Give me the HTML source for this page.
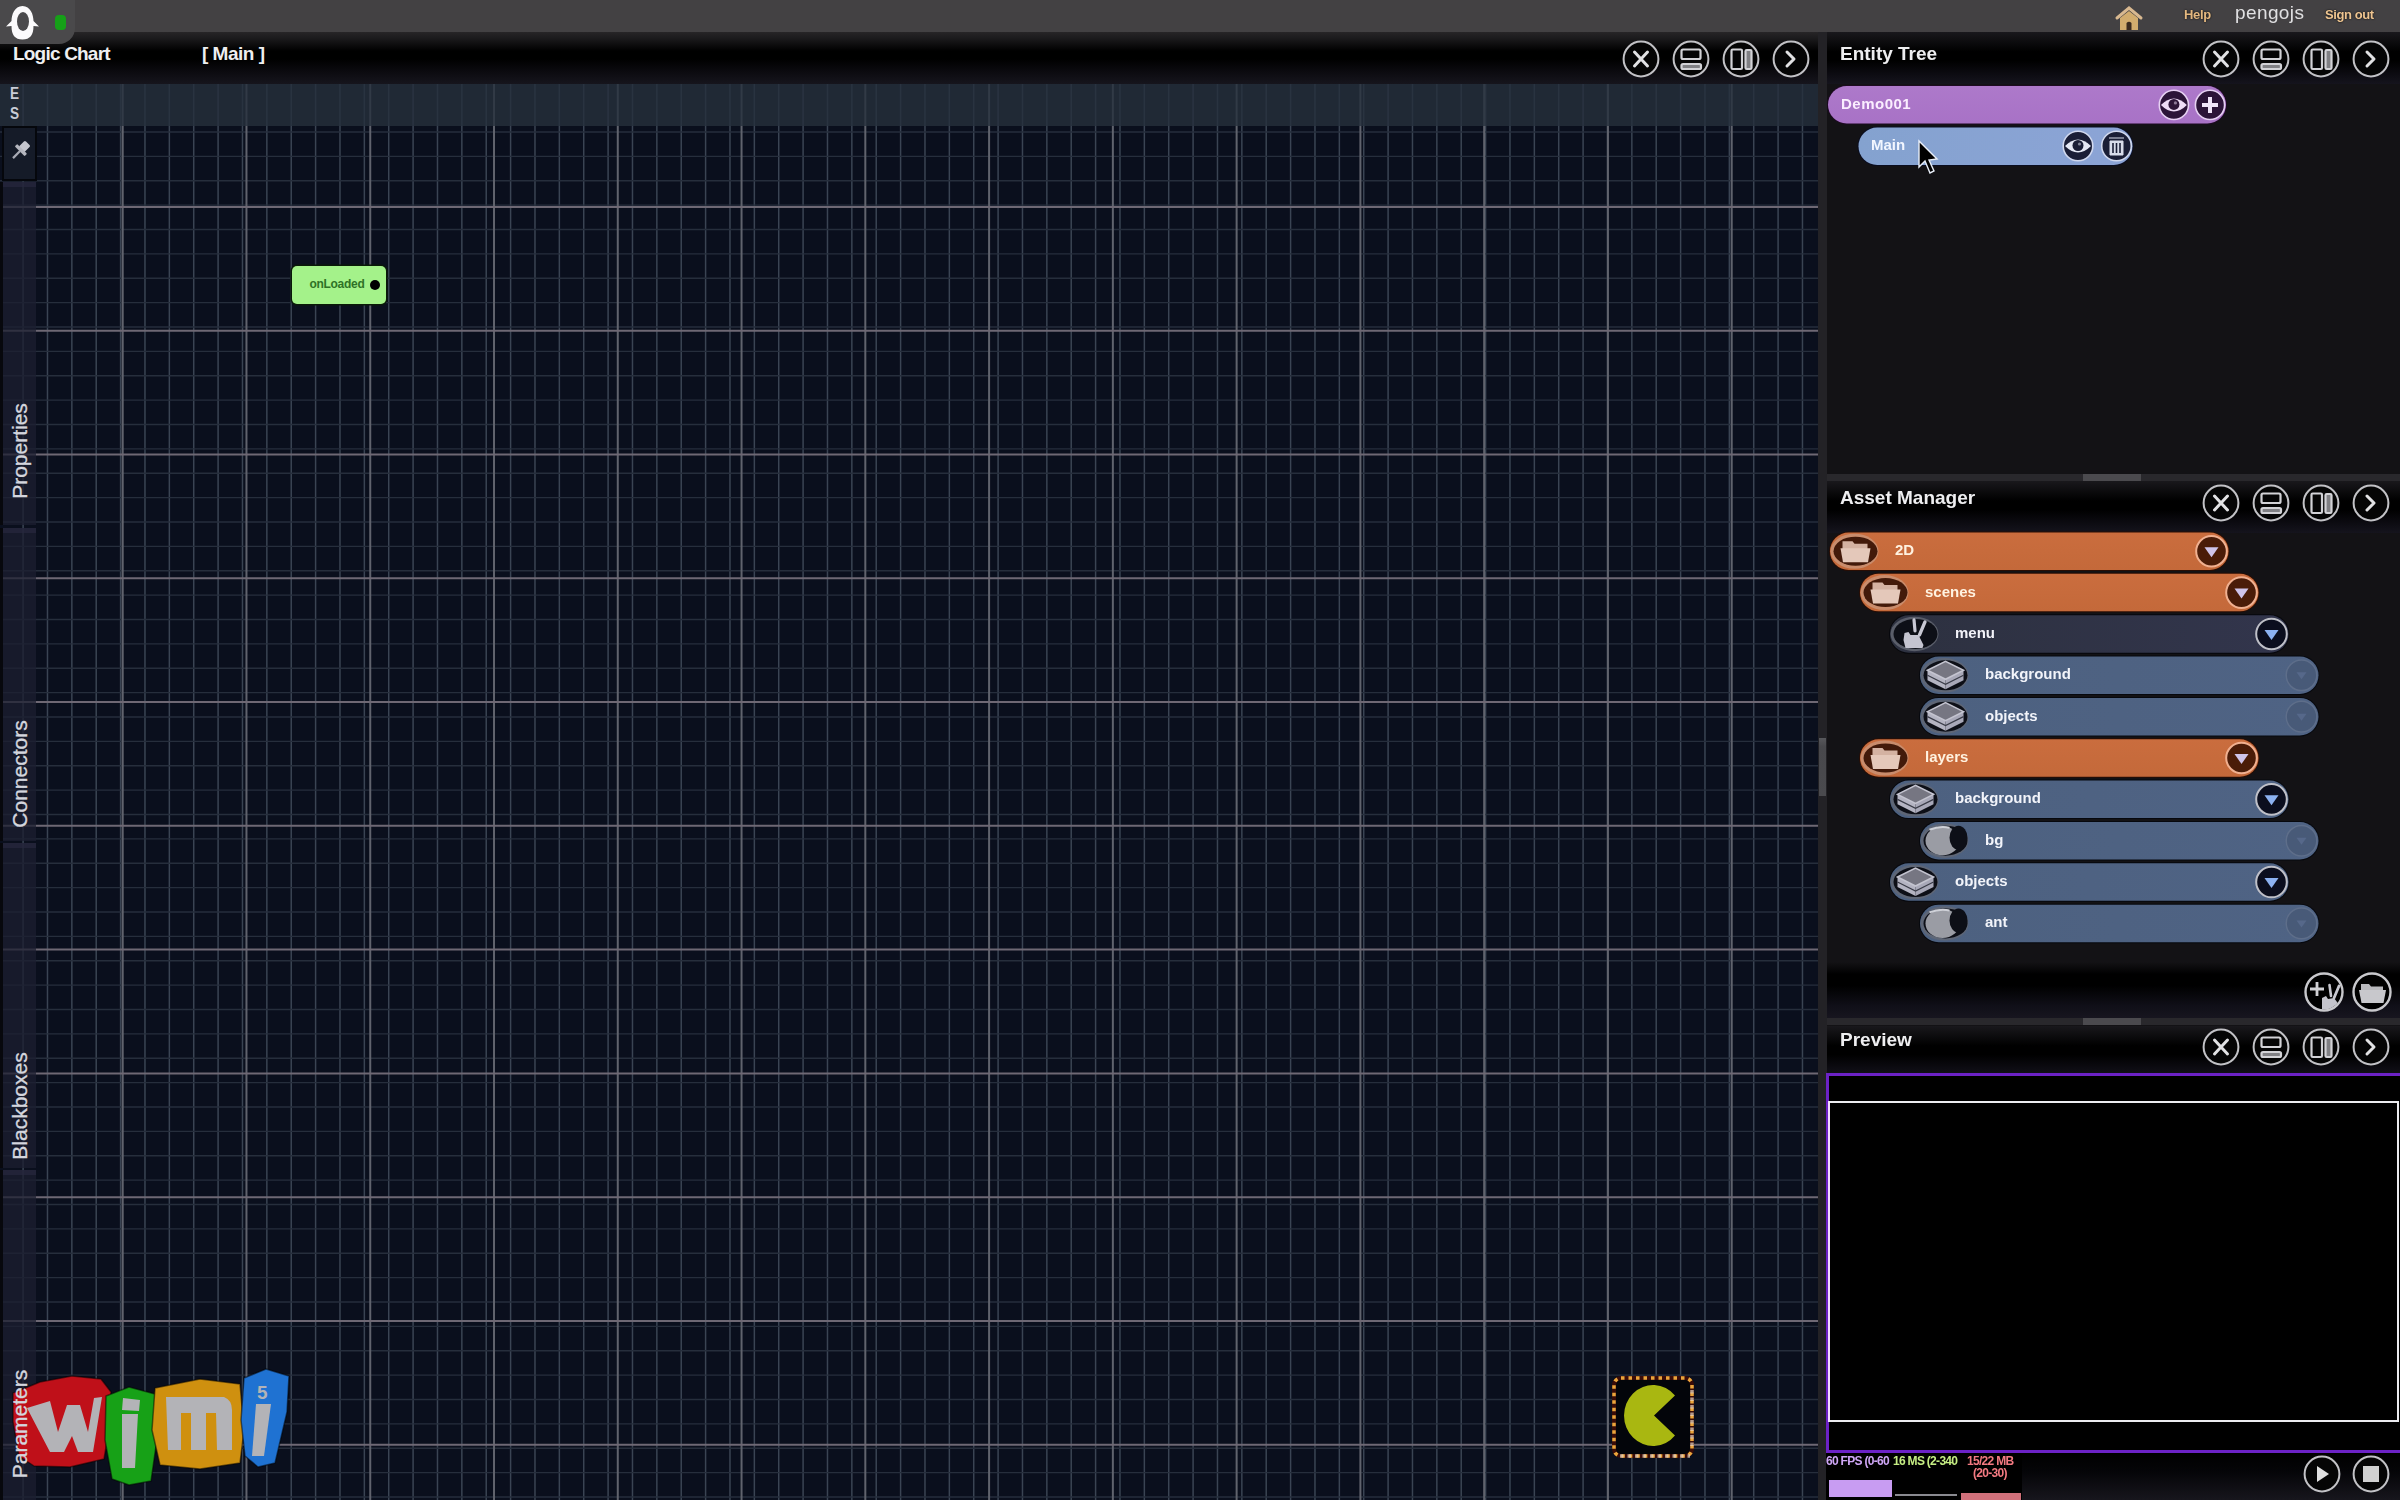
<!DOCTYPE html><html><head><meta charset="utf-8"><style>
*{margin:0;padding:0;box-sizing:border-box}
html,body{width:2400px;height:1500px;overflow:hidden;background:#0e0d11;font-family:"Liberation Sans",sans-serif}
.abs{position:absolute}
.t{position:absolute;white-space:nowrap;line-height:1}
.title{font-weight:bold;font-size:19px;color:#eeeef0}
</style></head><body><div style="position:absolute;left:0;top:0;width:2400px;height:1500px;overflow:hidden;filter:blur(0.45px)">
<div class="abs" style="left:0;top:0;width:2400px;height:32px;background:#434143"></div>
<div class="abs" style="left:0;top:32px;width:1818px;height:52px;background:linear-gradient(#272527 0px,#1c1b1d 6px,#000 19px,#000 27px,#0c0b10 40px,#16151d 52px)"></div>
<svg class="abs" style="left:0;top:0" width="1818" height="1500">
<rect x="0" y="84" width="1818" height="1416" fill="#0a0f1d"/>
<path d="M23.10 84V1500M47.48 84V1500M71.85 84V1500M96.22 84V1500M120.60 84V1500M144.97 84V1500M169.35 84V1500M193.72 84V1500M218.10 84V1500M242.47 84V1500M266.85 84V1500M291.23 84V1500M315.60 84V1500M339.98 84V1500M364.35 84V1500M388.73 84V1500M413.10 84V1500M437.48 84V1500M461.85 84V1500M486.23 84V1500M510.60 84V1500M534.98 84V1500M559.35 84V1500M583.73 84V1500M608.10 84V1500M632.48 84V1500M656.85 84V1500M681.23 84V1500M705.60 84V1500M729.98 84V1500M754.35 84V1500M778.73 84V1500M803.10 84V1500M827.48 84V1500M851.85 84V1500M876.23 84V1500M900.60 84V1500M924.98 84V1500M949.35 84V1500M973.73 84V1500M998.10 84V1500M1022.48 84V1500M1046.85 84V1500M1071.22 84V1500M1095.60 84V1500M1119.97 84V1500M1144.35 84V1500M1168.72 84V1500M1193.10 84V1500M1217.47 84V1500M1241.85 84V1500M1266.22 84V1500M1290.60 84V1500M1314.97 84V1500M1339.35 84V1500M1363.72 84V1500M1388.10 84V1500M1412.47 84V1500M1436.85 84V1500M1461.22 84V1500M1485.60 84V1500M1509.97 84V1500M1534.35 84V1500M1558.72 84V1500M1583.10 84V1500M1607.47 84V1500M1631.85 84V1500M1656.22 84V1500M1680.60 84V1500M1704.97 84V1500M1729.35 84V1500M1753.72 84V1500M1778.10 84V1500M1802.47 84V1500" stroke="#3a4453" stroke-width="1.5" fill="none"/><path d="M0 131.97H1818M0 156.35H1818M0 180.72H1818M0 205.10H1818M0 229.47H1818M0 253.85H1818M0 278.23H1818M0 302.60H1818M0 326.98H1818M0 351.35H1818M0 375.73H1818M0 400.10H1818M0 424.48H1818M0 448.85H1818M0 473.23H1818M0 497.60H1818M0 521.98H1818M0 546.35H1818M0 570.73H1818M0 595.10H1818M0 619.48H1818M0 643.85H1818M0 668.23H1818M0 692.60H1818M0 716.98H1818M0 741.35H1818M0 765.73H1818M0 790.10H1818M0 814.48H1818M0 838.85H1818M0 863.23H1818M0 887.60H1818M0 911.98H1818M0 936.35H1818M0 960.73H1818M0 985.10H1818M0 1009.48H1818M0 1033.85H1818M0 1058.22H1818M0 1082.60H1818M0 1106.97H1818M0 1131.35H1818M0 1155.72H1818M0 1180.10H1818M0 1204.47H1818M0 1228.85H1818M0 1253.22H1818M0 1277.60H1818M0 1301.97H1818M0 1326.35H1818M0 1350.72H1818M0 1375.10H1818M0 1399.47H1818M0 1423.85H1818M0 1448.22H1818M0 1472.60H1818M0 1496.97H1818" stroke="#262e3c" stroke-width="1.4" fill="none"/>
<path d="M122.70 84V1500M246.47 84V1500M370.24 84V1500M494.01 84V1500M617.78 84V1500M741.55 84V1500M865.32 84V1500M989.09 84V1500M1112.86 84V1500M1236.63 84V1500M1360.40 84V1500M1484.17 84V1500M1607.94 84V1500M1731.71 84V1500" stroke="#60636d" stroke-width="2" fill="none"/>
<path d="M0 207.00H1818M0 330.77H1818M0 454.54H1818M0 578.31H1818M0 702.08H1818M0 825.85H1818M0 949.62H1818M0 1073.39H1818M0 1197.16H1818M0 1320.93H1818M0 1444.70H1818" stroke="#6e6874" stroke-width="2" fill="none"/>
<rect x="0" y="84" width="1818" height="42" fill="#262f3c" fill-opacity="0.8"/>
</svg>
<div class="t" style="left:10px;top:85.5px;font-size:16px;font-weight:bold;color:#c8ccd6;transform:scaleX(0.85);transform-origin:0 0">E</div><div class="t" style="left:10px;top:105.5px;font-size:16px;font-weight:bold;color:#c8ccd6;transform:scaleX(0.85);transform-origin:0 0">S</div><div class="abs" style="left:2px;top:126px;width:35px;height:55px;background:#151b28;border:2px solid #05070c"></div><svg class="abs" style="left:7px;top:138px" width="26" height="28" viewBox="0 0 26 28"><g transform="rotate(45 13 13)"><rect x="9" y="2" width="8" height="9" rx="1.5" fill="#c4c6ce"/><rect x="6" y="10" width="14" height="3.5" rx="1" fill="#b4b6be"/><rect x="12" y="13" width="2.2" height="10" fill="#a8aab4"/></g></svg>
<div class="abs" style="left:0;top:0;width:1px;height:1px"></div>
<div class="abs" style="left:0;top:182px;width:3px;height:343px;background:#07080d"></div><div class="abs" style="left:3px;top:182px;width:33px;height:343px;background:rgba(28,31,48,0.75);border-top:5px solid rgba(40,40,62,0.7)"></div><div class="abs" style="left:0;top:528px;width:3px;height:313px;background:#07080d"></div><div class="abs" style="left:3px;top:528px;width:33px;height:313px;background:rgba(28,31,48,0.75);border-top:5px solid rgba(40,40,62,0.7)"></div><div class="abs" style="left:0;top:843px;width:3px;height:325px;background:#07080d"></div><div class="abs" style="left:3px;top:843px;width:33px;height:325px;background:rgba(28,31,48,0.75);border-top:5px solid rgba(40,40,62,0.7)"></div><div class="abs" style="left:0;top:1170px;width:3px;height:330px;background:#07080d"></div><div class="abs" style="left:3px;top:1170px;width:33px;height:330px;background:rgba(28,31,48,0.75);border-top:5px solid rgba(40,40,62,0.7)"></div>
<div class="abs" style="left:292px;top:266px;width:94px;height:38px;background:#a4f28a;border-radius:5px;box-shadow:0 0 0 1.5px #0a1a08"></div><div class="t" style="left:309.5px;top:277.8px;font-size:12px;font-weight:bold;color:#2f7226;letter-spacing:-0.3px">onLoaded</div><div class="abs" style="left:370px;top:280px;width:10px;height:10px;border-radius:50%;background:#000"></div><svg class="abs" style="left:1608px;top:1372px" width="92" height="92" viewBox="1608 1372 92 92"><rect x="1614" y="1378" width="78" height="78" rx="7" fill="#03050a" stroke="#3a0c08" stroke-width="4"/><rect x="1614" y="1378" width="78" height="78" rx="7" fill="none" stroke="#eaa53c" stroke-width="3.5" stroke-dasharray="3.5 4"/><path d="M1692 1390V1450M1620 1456H1690" stroke="#e8d6c4" stroke-width="3.5" stroke-dasharray="3.5 4" opacity=".7"/><path d="M1675 1395.6A29 30.5 0 1 0 1675 1435.4L1654 1415.5Z" fill="#a9b711"/></svg><svg class="abs" style="left:0px;top:1360px" width="300" height="140" viewBox="0 1360 300 140">
<g stroke="rgba(0,0,0,0.5)" stroke-width="1.5" stroke-linejoin="round">
<path d="M13 1393L40 1382L72 1376L101 1379L111 1392L109 1430L104 1459L70 1467L34 1466L19 1456L13 1422Z" fill="#bf1019"/>
<path d="M106 1396L129 1387L155 1394L158 1432L151 1481L129 1485L112 1479L105 1440Z" fill="#17a117"/>
<path d="M155 1388L200 1379L240 1384L244 1430L240 1463L200 1469L160 1465L152 1430Z" fill="#cf900f"/>
<path d="M244 1378L266 1369L289 1376L287 1412L275 1463L258 1467L245 1456L241 1420Z" fill="#1f72d2"/>
</g>
<path d="M27 1408L50 1401L58 1432L67 1405L80 1405L88 1432L94 1398L102 1397L93 1452L78 1452L72 1436L64 1452L50 1452Z" fill="#b3b3b7"/>
<path d="M123 1398L140 1400L139 1411L122 1410Z M122 1414L138 1414L135 1468L122 1468Z" fill="#b3b3b7"/>
<path d="M166 1397L224 1397Q232 1400 232 1410L232 1450L217 1450L216 1413L206 1413L206 1450L191 1450L191 1413L181 1413L181 1450L168 1450Z" fill="#b3b3b7"/>
<path d="M256 1404L271 1404L264 1456L252 1456Z" fill="#b3b3b7"/>
<text x="257" y="1399" font-family="Liberation Sans" font-weight="bold" font-size="19" fill="#b3b3b7">5</text>
</svg>
<div class="t" style="left:18.5px;top:450.75px;font-size:21px;line-height:21px;color:#d4d6de;-webkit-text-stroke:0.35px #d4d6de;transform:translate(-50%,-50%) rotate(-90deg)">Properties</div><div class="t" style="left:18.5px;top:774.25px;font-size:21px;line-height:21px;color:#d4d6de;-webkit-text-stroke:0.35px #d4d6de;transform:translate(-50%,-50%) rotate(-90deg)">Connectors</div><div class="t" style="left:18.5px;top:1106px;font-size:21px;line-height:21px;color:#d4d6de;-webkit-text-stroke:0.35px #d4d6de;transform:translate(-50%,-50%) rotate(-90deg)">Blackboxes</div><div class="t" style="left:18.5px;top:1423.5px;font-size:21px;line-height:21px;color:#d4d6de;-webkit-text-stroke:0.35px #d4d6de;transform:translate(-50%,-50%) rotate(-90deg)">Parameters</div>
<div class="abs" style="left:1818px;top:32px;width:9px;height:1468px;background:#232226"></div>
<div class="abs" style="left:1827px;top:32px;width:573px;height:1468px;background:#131215"></div>
<div class="abs" style="left:1819px;top:738px;width:7px;height:58px;background:linear-gradient(#58585c,#48484c 15%,#4a4a4e)"></div>
<div class="abs" style="left:0;top:0;width:75px;height:44px;background:#4a494b;border-bottom-right-radius:16px"></div>
<svg class="abs" style="left:0;top:0" width="45" height="45" viewBox="0 0 45 45"><path d="M22.5 6C14.5 6 11.5 15 11.5 21L6 26.5L11.5 26C11.5 35 15 39.5 22.5 39.5C30 39.5 33.5 35 33.5 26L39 26.5L33.5 21C33.5 15 30.5 6 22.5 6Z" fill="#fbfafc"/><ellipse cx="23" cy="21.5" rx="6" ry="9.5" fill="#4b4a4d"/></svg>
<div class="abs" style="left:55px;top:15px;width:11px;height:15px;border-radius:4px;background:#16a018"></div>
<svg class="abs" style="left:2112px;top:3px" width="34" height="30" viewBox="0 0 34 30"><path d="M5 15L17 5L29 15" stroke="#d8b890" stroke-width="3" fill="none" stroke-linecap="round"/><path d="M8 15L17 8L26 15V27H8Z" fill="#d2ac6e"/><path d="M14.5 27V20Q17 17.5 19.5 20V27Z" fill="#3a2a20"/></svg>
<div class="t" style="left:2184px;top:7.7px;font-size:13px;font-weight:bold;color:#e4b880;letter-spacing:-0.3px;text-shadow:0 0 2px #000">Help</div>
<div class="t" style="left:2235px;top:3px;font-size:19px;color:#e0e0e2;letter-spacing:0.4px">pengojs</div>
<div class="t" style="left:2325px;top:7.7px;font-size:13px;font-weight:bold;color:#eec490;letter-spacing:-0.4px;text-shadow:0 0 2px #000">Sign out</div>
<div class="t title" style="left:13px;top:44px;letter-spacing:-0.8px">Logic Chart</div>
<div class="t title" style="left:202px;top:44px;letter-spacing:-0.5px">[ Main ]</div>
<svg class="abs" style="left:1620px;top:38px" width="42" height="42" viewBox="-21 -21 42 42"><circle r="17.4" fill="#050505" stroke="#c2c2c6" stroke-width="2"/><path d="M-6.5 -7L6.5 7M6.5 -7L-6.5 7" stroke="#e2e2e4" stroke-width="3" stroke-linecap="round"/></svg><svg class="abs" style="left:1670px;top:38px" width="42" height="42" viewBox="-21 -21 42 42"><circle r="17.4" fill="#050505" stroke="#c2c2c6" stroke-width="2"/><rect x="-9.5" y="-9.5" width="19" height="9.5" rx="1.5" fill="none" stroke="#d2d2d6" stroke-width="2.2"/><rect x="-9.5" y="5" width="19.5" height="5" rx="1.5" fill="#808084" stroke="#d2d2d6" stroke-width="2.2"/></svg><svg class="abs" style="left:1720px;top:38px" width="42" height="42" viewBox="-21 -21 42 42"><circle r="17.4" fill="#050505" stroke="#c2c2c6" stroke-width="2"/><rect x="-9.5" y="-9.5" width="10.5" height="19.5" rx="1.2" fill="none" stroke="#d2d2d6" stroke-width="2.2"/><rect x="4.5" y="-9" width="6" height="19" rx="1.2" fill="#808084" stroke="#d2d2d6" stroke-width="2.2"/></svg><svg class="abs" style="left:1770px;top:38px" width="42" height="42" viewBox="-21 -21 42 42"><circle r="17.4" fill="#050505" stroke="#c2c2c6" stroke-width="2"/><path d="M-4 -7L3 0L-4 7" stroke="#e2e2e4" stroke-width="3" fill="none" stroke-linecap="round" stroke-linejoin="round"/></svg>
<div class="abs" style="left:1827px;top:32px;width:573px;height:52px;background:linear-gradient(#19181c,#000 38%,#000 55%,#0c0b11 80%,#15141d)"></div>
<div class="t title" style="left:1840px;top:43.9px">Entity Tree</div>
<svg class="abs" style="left:2200px;top:38px" width="42" height="42" viewBox="-21 -21 42 42"><circle r="17.4" fill="#050505" stroke="#c2c2c6" stroke-width="2"/><path d="M-6.5 -7L6.5 7M6.5 -7L-6.5 7" stroke="#e2e2e4" stroke-width="3" stroke-linecap="round"/></svg><svg class="abs" style="left:2250px;top:38px" width="42" height="42" viewBox="-21 -21 42 42"><circle r="17.4" fill="#050505" stroke="#c2c2c6" stroke-width="2"/><rect x="-9.5" y="-9.5" width="19" height="9.5" rx="1.5" fill="none" stroke="#d2d2d6" stroke-width="2.2"/><rect x="-9.5" y="5" width="19.5" height="5" rx="1.5" fill="#808084" stroke="#d2d2d6" stroke-width="2.2"/></svg><svg class="abs" style="left:2300px;top:38px" width="42" height="42" viewBox="-21 -21 42 42"><circle r="17.4" fill="#050505" stroke="#c2c2c6" stroke-width="2"/><rect x="-9.5" y="-9.5" width="10.5" height="19.5" rx="1.2" fill="none" stroke="#d2d2d6" stroke-width="2.2"/><rect x="4.5" y="-9" width="6" height="19" rx="1.2" fill="#808084" stroke="#d2d2d6" stroke-width="2.2"/></svg><svg class="abs" style="left:2350px;top:38px" width="42" height="42" viewBox="-21 -21 42 42"><circle r="17.4" fill="#050505" stroke="#c2c2c6" stroke-width="2"/><path d="M-4 -7L3 0L-4 7" stroke="#e2e2e4" stroke-width="3" fill="none" stroke-linecap="round" stroke-linejoin="round"/></svg>
<div class="abs" style="left:1827px;top:481px;width:573px;height:52px;background:linear-gradient(#19181c,#000 38%,#000 55%,#0c0b11 80%,#15141d)"></div>
<div class="t title" style="left:1840px;top:487.7px">Asset Manager</div>
<svg class="abs" style="left:2200px;top:482px" width="42" height="42" viewBox="-21 -21 42 42"><circle r="17.4" fill="#050505" stroke="#c2c2c6" stroke-width="2"/><path d="M-6.5 -7L6.5 7M6.5 -7L-6.5 7" stroke="#e2e2e4" stroke-width="3" stroke-linecap="round"/></svg><svg class="abs" style="left:2250px;top:482px" width="42" height="42" viewBox="-21 -21 42 42"><circle r="17.4" fill="#050505" stroke="#c2c2c6" stroke-width="2"/><rect x="-9.5" y="-9.5" width="19" height="9.5" rx="1.5" fill="none" stroke="#d2d2d6" stroke-width="2.2"/><rect x="-9.5" y="5" width="19.5" height="5" rx="1.5" fill="#808084" stroke="#d2d2d6" stroke-width="2.2"/></svg><svg class="abs" style="left:2300px;top:482px" width="42" height="42" viewBox="-21 -21 42 42"><circle r="17.4" fill="#050505" stroke="#c2c2c6" stroke-width="2"/><rect x="-9.5" y="-9.5" width="10.5" height="19.5" rx="1.2" fill="none" stroke="#d2d2d6" stroke-width="2.2"/><rect x="4.5" y="-9" width="6" height="19" rx="1.2" fill="#808084" stroke="#d2d2d6" stroke-width="2.2"/></svg><svg class="abs" style="left:2350px;top:482px" width="42" height="42" viewBox="-21 -21 42 42"><circle r="17.4" fill="#050505" stroke="#c2c2c6" stroke-width="2"/><path d="M-4 -7L3 0L-4 7" stroke="#e2e2e4" stroke-width="3" fill="none" stroke-linecap="round" stroke-linejoin="round"/></svg>
<div class="abs" style="left:1827px;top:1026px;width:573px;height:52px;background:linear-gradient(#19181c,#000 38%,#000 55%,#0c0b11 80%,#15141d)"></div>
<div class="t title" style="left:1840px;top:1029.9px">Preview</div>
<svg class="abs" style="left:2200px;top:1026px" width="42" height="42" viewBox="-21 -21 42 42"><circle r="17.4" fill="#050505" stroke="#c2c2c6" stroke-width="2"/><path d="M-6.5 -7L6.5 7M6.5 -7L-6.5 7" stroke="#e2e2e4" stroke-width="3" stroke-linecap="round"/></svg><svg class="abs" style="left:2250px;top:1026px" width="42" height="42" viewBox="-21 -21 42 42"><circle r="17.4" fill="#050505" stroke="#c2c2c6" stroke-width="2"/><rect x="-9.5" y="-9.5" width="19" height="9.5" rx="1.5" fill="none" stroke="#d2d2d6" stroke-width="2.2"/><rect x="-9.5" y="5" width="19.5" height="5" rx="1.5" fill="#808084" stroke="#d2d2d6" stroke-width="2.2"/></svg><svg class="abs" style="left:2300px;top:1026px" width="42" height="42" viewBox="-21 -21 42 42"><circle r="17.4" fill="#050505" stroke="#c2c2c6" stroke-width="2"/><rect x="-9.5" y="-9.5" width="10.5" height="19.5" rx="1.2" fill="none" stroke="#d2d2d6" stroke-width="2.2"/><rect x="4.5" y="-9" width="6" height="19" rx="1.2" fill="#808084" stroke="#d2d2d6" stroke-width="2.2"/></svg><svg class="abs" style="left:2350px;top:1026px" width="42" height="42" viewBox="-21 -21 42 42"><circle r="17.4" fill="#050505" stroke="#c2c2c6" stroke-width="2"/><path d="M-4 -7L3 0L-4 7" stroke="#e2e2e4" stroke-width="3" fill="none" stroke-linecap="round" stroke-linejoin="round"/></svg>
<div class="abs" style="left:1827px;top:474px;width:573px;height:7px;background:#29282c"></div>
<div class="abs" style="left:2083px;top:474px;width:58px;height:7px;background:#4b4a4e"></div>
<div class="abs" style="left:1827px;top:1018px;width:573px;height:7px;background:#29282c"></div>
<div class="abs" style="left:2083px;top:1018px;width:58px;height:7px;background:#4b4a4e"></div>
<div class="abs" style="left:1827px;top:962px;width:573px;height:56px;background:linear-gradient(#131215,#000 22%,#000 42%,#100f18 78%,#17151f)"></div>
<svg class="abs" style="left:2300px;top:968px" width="100" height="48" viewBox="2300 968 100 48"><defs><clipPath id="cc"><circle cx="2324" cy="992" r="17.5"/></clipPath></defs><circle cx="2324" cy="992" r="18.5" fill="#000" stroke="#c8c8cc" stroke-width="2.4"/><path d="M2317 982V996M2310 989H2324" stroke="#d0d0d4" stroke-width="2.8"/><g clip-path="url(#cc)"><path d="M2329.5 985L2331 996" stroke="#c8c8d0" stroke-width="2.6" stroke-linecap="round"/><path d="M2339 986L2334 998" stroke="#c8c8d0" stroke-width="2.8" stroke-linecap="round"/><path d="M2322 998L2326 996L2328 999L2334 998L2340 1006L2338 1012L2322 1012Z" fill="#c4c4cc"/></g><circle cx="2372" cy="992" r="18.5" fill="#000" stroke="#c8c8cc" stroke-width="2.4"/><path d="M2361 984h8l2 2.5h12v5h-22z" fill="#b8b8bc"/><path d="M2359 990h27l-2.5 13h-22z" fill="#c8c8cc"/></svg>
<svg class="abs" style="left:1820px;top:80px" width="420" height="95" viewBox="1820 80 420 95"><defs><linearGradient id="gp" x1="0" y1="0" x2="0" y2="1"><stop offset="0" stop-color="#ad79ca"/><stop offset="1" stop-color="#a872c6"/></linearGradient><linearGradient id="gb" x1="0" y1="0" x2="1" y2="0"><stop offset="0" stop-color="#84a2cf"/><stop offset="1" stop-color="#8ca4d6"/></linearGradient></defs><rect x="1827" y="85" width="400" height="39.5" rx="19.75" fill="#1d0a22"/><rect x="1828" y="86" width="398" height="37.5" rx="18.75" fill="url(#gp)"/><circle cx="2173.9" cy="104.9" r="14.6" fill="#2c1438" stroke="#e6d0f2" stroke-width="1.6"/><path d="M2160.9 104.9Q2173.9 91.9 2186.9 104.9Q2173.9 117.9 2160.9 104.9Z" fill="#eedcf6"/><circle cx="2173.9" cy="104.4" r="5.5" fill="#2c1438"/><circle cx="2175.4" cy="102.9" r="1.6" fill="#eedcf6" opacity=".5"/><circle cx="2210" cy="104.9" r="14.6" fill="#2c1438" stroke="#e6d0f2" stroke-width="1.6"/><path d="M2210 97V113M2202 105H2218" stroke="#f0e4f8" stroke-width="4"/><rect x="1857.5" y="126.5" width="276" height="39.5" rx="19.75" fill="#0a0d20"/><rect x="1858.5" y="127.5" width="274" height="37.5" rx="18.75" fill="url(#gb)"/><circle cx="2078" cy="146" r="14.8" fill="#1a1e36" stroke="#d0d8ee" stroke-width="1.6"/><path d="M2065 146Q2078 133 2091 146Q2078 159 2065 146Z" fill="#e4e8f4"/><circle cx="2078" cy="145.5" r="5.5" fill="#1a1e36"/><circle cx="2079.5" cy="144" r="1.6" fill="#e4e8f4" opacity=".5"/><circle cx="2116.5" cy="146" r="14.8" fill="#1a1e36" stroke="#d0d8ee" stroke-width="1.6"/><path d="M2109 138H2124M2110 141H2123V155H2110Z" fill="#d8dcea" stroke="#d8dcea" stroke-width="1"/><path d="M2113 143V153M2116.5 143V153M2120 143V153" stroke="#1a1e36" stroke-width="1.6"/><path d="M1919 141L1919 167L1925 161L1930 173L1934 171L1929 160L1937 159Z" fill="#000" stroke="#e8eef8" stroke-width="1.4"/></svg><div class="t" style="left:1841px;top:96px;font-size:15px;font-weight:bold;color:#fbeeff;letter-spacing:0.5px">Demo001</div><div class="t" style="left:1871px;top:136.8px;font-size:15px;font-weight:bold;color:#f2f6ff">Main</div>
<svg class="abs" style="left:1820px;top:525px" width="520" height="430" viewBox="1820 525 520 430"><defs><linearGradient id="go" x1="0" y1="0" x2="0" y2="1"><stop offset="0" stop-color="#ca6d3e"/><stop offset="1" stop-color="#c4693a"/></linearGradient><linearGradient id="gd" x1="0" y1="0" x2="1" y2="0"><stop offset="0" stop-color="#2d3140"/><stop offset="1" stop-color="#32354c"/></linearGradient><linearGradient id="gl" x1="0" y1="0" x2="1" y2="0"><stop offset="0" stop-color="#4d6180"/><stop offset="1" stop-color="#4f6384"/></linearGradient></defs><rect x="1829" y="531.5" width="400.5" height="39.5" rx="19.75" fill="#2a0e04"/><rect x="1830" y="532.5" width="398.5" height="37.5" rx="18.75" fill="url(#go)"/><ellipse cx="1854.5" cy="551.25" rx="24" ry="17.5" fill="#c98c6c"/><ellipse cx="1855.5" cy="551.25" rx="22" ry="14.5" fill="#431a0a"/><path d="M1842.5 541.25h10l2 2.5h13v8h-25z" fill="#d4b2a2"/><path d="M1840.5 548.25h30l-2.5 14h-25z" fill="#e4c8ba"/><circle cx="2211.5" cy="551.25" r="15.3" fill="#4a1c08" stroke="#f0b090" stroke-width="2"/><path d="M2204.5 547.25H2218.5L2211.5 557.25Z" fill="#cfc4ea"/><rect x="1859" y="572.85" width="400.5" height="39.5" rx="19.75" fill="#2a0e04"/><rect x="1860" y="573.85" width="398.5" height="37.5" rx="18.75" fill="url(#go)"/><ellipse cx="1884.5" cy="592.6" rx="24" ry="17.5" fill="#c98c6c"/><ellipse cx="1885.5" cy="592.6" rx="22" ry="14.5" fill="#431a0a"/><path d="M1872.5 582.6h10l2 2.5h13v8h-25z" fill="#d4b2a2"/><path d="M1870.5 589.6h30l-2.5 14h-25z" fill="#e4c8ba"/><circle cx="2241.5" cy="592.6" r="15.3" fill="#4a1c08" stroke="#f0b090" stroke-width="2"/><path d="M2234.5 588.6H2248.5L2241.5 598.6Z" fill="#cfc4ea"/><rect x="1889" y="614.2" width="400.5" height="39.5" rx="19.75" fill="#06070c"/><rect x="1890" y="615.2" width="398.5" height="37.5" rx="18.75" fill="url(#gd)"/><ellipse cx="1914.5" cy="633.95" rx="24" ry="17.2" fill="#5a5e6a"/><ellipse cx="1915.5" cy="633.95" rx="22" ry="15" fill="#0d0f17"/><path d="M1914.0 619.95L1915.0 630.95" stroke="#c8c8d4" stroke-width="3.2" stroke-linecap="round"/><path d="M1925.0 621.95L1919.5 634.95" stroke="#c8c8d4" stroke-width="3.4" stroke-linecap="round"/><path d="M1904.5 632.95L1908.5 631.95L1910.5 634.95L1918.5 634.95L1923.5 644.95L1922.5 647.95L1905.5 647.95L1903.5 639.95Z" fill="#c4c4d0"/><circle cx="2271.5" cy="633.95" r="15.3" fill="#0b0e1e" stroke="#bfc0c8" stroke-width="2"/><path d="M2264.5 629.95H2278.5L2271.5 639.95Z" fill="#8cb2f2"/><rect x="1919" y="655.55" width="400.5" height="39.5" rx="19.75" fill="#06080e"/><rect x="1920" y="656.55" width="398.5" height="37.5" rx="18.75" fill="url(#gl)"/><ellipse cx="1944.5" cy="675.3" rx="24" ry="17.2" fill="#5e6676"/><ellipse cx="1945.5" cy="675.3" rx="22" ry="15" fill="#0d0f17"/><path d="M1927.5 670.3L1945.5 679.3L1945.5 689.3L1927.5 680.3Z" fill="#b4b4c2"/><path d="M1963.5 670.3L1945.5 679.3L1945.5 689.3L1963.5 680.3Z" fill="#a8a8b8"/><path d="M1927.5 675.3L1945.5 684.3L1963.5 675.3" stroke="#3a3c48" stroke-width="1.2" fill="none"/><path d="M1927.5 670.3L1945.5 661.3L1963.5 670.3L1945.5 679.3Z" fill="#767682" stroke="#c4c4d0" stroke-width="1.6"/><circle cx="2301.5" cy="675.3" r="15.3" fill="#485a78" stroke="#5e6e8a" stroke-width="1.5"/><path d="M2296.5 672.3H2306.5L2301.5 679.3Z" fill="#56688a"/><rect x="1919" y="696.9" width="400.5" height="39.5" rx="19.75" fill="#06080e"/><rect x="1920" y="697.9" width="398.5" height="37.5" rx="18.75" fill="url(#gl)"/><ellipse cx="1944.5" cy="716.65" rx="24" ry="17.2" fill="#5e6676"/><ellipse cx="1945.5" cy="716.65" rx="22" ry="15" fill="#0d0f17"/><path d="M1927.5 711.65L1945.5 720.65L1945.5 730.65L1927.5 721.65Z" fill="#b4b4c2"/><path d="M1963.5 711.65L1945.5 720.65L1945.5 730.65L1963.5 721.65Z" fill="#a8a8b8"/><path d="M1927.5 716.65L1945.5 725.65L1963.5 716.65" stroke="#3a3c48" stroke-width="1.2" fill="none"/><path d="M1927.5 711.65L1945.5 702.65L1963.5 711.65L1945.5 720.65Z" fill="#767682" stroke="#c4c4d0" stroke-width="1.6"/><circle cx="2301.5" cy="716.65" r="15.3" fill="#485a78" stroke="#5e6e8a" stroke-width="1.5"/><path d="M2296.5 713.65H2306.5L2301.5 720.65Z" fill="#56688a"/><rect x="1859" y="738.25" width="400.5" height="39.5" rx="19.75" fill="#2a0e04"/><rect x="1860" y="739.25" width="398.5" height="37.5" rx="18.75" fill="url(#go)"/><ellipse cx="1884.5" cy="758.0" rx="24" ry="17.5" fill="#c98c6c"/><ellipse cx="1885.5" cy="758.0" rx="22" ry="14.5" fill="#431a0a"/><path d="M1872.5 748.0h10l2 2.5h13v8h-25z" fill="#d4b2a2"/><path d="M1870.5 755.0h30l-2.5 14h-25z" fill="#e4c8ba"/><circle cx="2241.5" cy="758.0" r="15.3" fill="#4a1c08" stroke="#f0b090" stroke-width="2"/><path d="M2234.5 754.0H2248.5L2241.5 764.0Z" fill="#cfc4ea"/><rect x="1889" y="779.6" width="400.5" height="39.5" rx="19.75" fill="#06080e"/><rect x="1890" y="780.6" width="398.5" height="37.5" rx="18.75" fill="url(#gl)"/><ellipse cx="1914.5" cy="799.35" rx="24" ry="17.2" fill="#5e6676"/><ellipse cx="1915.5" cy="799.35" rx="22" ry="15" fill="#0d0f17"/><path d="M1897.5 794.35L1915.5 803.35L1915.5 813.35L1897.5 804.35Z" fill="#b4b4c2"/><path d="M1933.5 794.35L1915.5 803.35L1915.5 813.35L1933.5 804.35Z" fill="#a8a8b8"/><path d="M1897.5 799.35L1915.5 808.35L1933.5 799.35" stroke="#3a3c48" stroke-width="1.2" fill="none"/><path d="M1897.5 794.35L1915.5 785.35L1933.5 794.35L1915.5 803.35Z" fill="#767682" stroke="#c4c4d0" stroke-width="1.6"/><circle cx="2271.5" cy="799.35" r="15.3" fill="#0b0e1e" stroke="#bfc0c8" stroke-width="2"/><path d="M2264.5 795.35H2278.5L2271.5 805.35Z" fill="#8cb2f2"/><rect x="1919" y="820.95" width="400.5" height="39.5" rx="19.75" fill="#06080e"/><rect x="1920" y="821.95" width="398.5" height="37.5" rx="18.75" fill="url(#gl)"/><ellipse cx="1944.5" cy="840.7" rx="24" ry="17.2" fill="#5e6676"/><ellipse cx="1945.5" cy="840.7" rx="22" ry="15" fill="#0d0f17"/><ellipse cx="1942.5" cy="840.7" rx="17" ry="14.5" fill="#9a9ca4"/><ellipse cx="1958.5" cy="837.7" rx="9" ry="12" fill="#0d0f17"/><path d="M1929.5 829.7Q1939.5 825.7 1949.5 827.7" stroke="#cfd1d8" stroke-width="2" fill="none"/><circle cx="2301.5" cy="840.7" r="15.3" fill="#485a78" stroke="#5e6e8a" stroke-width="1.5"/><path d="M2296.5 837.7H2306.5L2301.5 844.7Z" fill="#56688a"/><rect x="1889" y="862.3" width="400.5" height="39.5" rx="19.75" fill="#06080e"/><rect x="1890" y="863.3" width="398.5" height="37.5" rx="18.75" fill="url(#gl)"/><ellipse cx="1914.5" cy="882.05" rx="24" ry="17.2" fill="#5e6676"/><ellipse cx="1915.5" cy="882.05" rx="22" ry="15" fill="#0d0f17"/><path d="M1897.5 877.05L1915.5 886.05L1915.5 896.05L1897.5 887.05Z" fill="#b4b4c2"/><path d="M1933.5 877.05L1915.5 886.05L1915.5 896.05L1933.5 887.05Z" fill="#a8a8b8"/><path d="M1897.5 882.05L1915.5 891.05L1933.5 882.05" stroke="#3a3c48" stroke-width="1.2" fill="none"/><path d="M1897.5 877.05L1915.5 868.05L1933.5 877.05L1915.5 886.05Z" fill="#767682" stroke="#c4c4d0" stroke-width="1.6"/><circle cx="2271.5" cy="882.05" r="15.3" fill="#0b0e1e" stroke="#bfc0c8" stroke-width="2"/><path d="M2264.5 878.05H2278.5L2271.5 888.05Z" fill="#8cb2f2"/><rect x="1919" y="903.6500000000001" width="400.5" height="39.5" rx="19.75" fill="#06080e"/><rect x="1920" y="904.6500000000001" width="398.5" height="37.5" rx="18.75" fill="url(#gl)"/><ellipse cx="1944.5" cy="923.4000000000001" rx="24" ry="17.2" fill="#5e6676"/><ellipse cx="1945.5" cy="923.4000000000001" rx="22" ry="15" fill="#0d0f17"/><ellipse cx="1942.5" cy="923.4000000000001" rx="17" ry="14.5" fill="#9a9ca4"/><ellipse cx="1958.5" cy="920.4000000000001" rx="9" ry="12" fill="#0d0f17"/><path d="M1929.5 912.4000000000001Q1939.5 908.4000000000001 1949.5 910.4000000000001" stroke="#cfd1d8" stroke-width="2" fill="none"/><circle cx="2301.5" cy="923.4000000000001" r="15.3" fill="#485a78" stroke="#5e6e8a" stroke-width="1.5"/><path d="M2296.5 920.4000000000001H2306.5L2301.5 927.4000000000001Z" fill="#56688a"/></svg><div class="t" style="left:1895px;top:542.2px;font-size:15px;font-weight:bold;color:#fff2e0">2D</div><div class="t" style="left:1925px;top:583.6px;font-size:15px;font-weight:bold;color:#fff2e0">scenes</div><div class="t" style="left:1955px;top:625.0px;font-size:15px;font-weight:bold;color:#f2f2f8">menu</div><div class="t" style="left:1985px;top:666.3px;font-size:15px;font-weight:bold;color:#f2f4fa">background</div><div class="t" style="left:1985px;top:707.6px;font-size:15px;font-weight:bold;color:#f2f4fa">objects</div><div class="t" style="left:1925px;top:749.0px;font-size:15px;font-weight:bold;color:#fff2e0">layers</div><div class="t" style="left:1955px;top:790.4px;font-size:15px;font-weight:bold;color:#f2f4fa">background</div><div class="t" style="left:1985px;top:831.7px;font-size:15px;font-weight:bold;color:#f2f4fa">bg</div><div class="t" style="left:1955px;top:873.0px;font-size:15px;font-weight:bold;color:#f2f4fa">objects</div><div class="t" style="left:1985px;top:914.4px;font-size:15px;font-weight:bold;color:#f2f4fa">ant</div>
<div class="abs" style="left:1826px;top:1453px;width:574px;height:47px;background:linear-gradient(#000,#050508 40%,#17161d)"></div><div class="abs" style="left:1826px;top:1453px;width:196px;height:47px;background:#000"></div><div class="abs" style="left:1826px;top:1073px;width:580px;height:380px;background:#000;border:3px solid #6c22c6"></div><div class="abs" style="left:1828px;top:1101px;width:571px;height:321px;border:2px solid #ececf0;border-left-color:#f2dcff"></div><div class="t" style="left:1826px;top:1455px;font-size:12px;letter-spacing:-0.7px;font-weight:bold;color:#cfa6f6">60 FPS (0-60</div><div class="t" style="left:1893px;top:1455px;font-size:12px;letter-spacing:-0.7px;font-weight:bold;color:#c6ee84">16 MS (2-340</div><div class="t" style="left:1967px;top:1455px;font-size:12px;letter-spacing:-0.7px;font-weight:bold;color:#f47a82">15/22 MB</div><div class="t" style="left:1973px;top:1467px;font-size:12px;letter-spacing:-0.7px;font-weight:bold;color:#f47a82">(20-30)</div><div class="abs" style="left:1829px;top:1480px;width:63px;height:17px;background:#c89cf2"></div><div class="abs" style="left:1895px;top:1494px;width:62px;height:2px;background:#8a8a90"></div><div class="abs" style="left:1961px;top:1493px;width:60px;height:7px;background:#d0707a"></div><svg class="abs" style="left:2301px;top:1453px" width="42" height="42" viewBox="-21 -21 42 42"><circle r="17.4" fill="#050505" stroke="#c2c2c6" stroke-width="2"/><path d="M-5 -8L7 0L-5 8Z" fill="#e0e0e0"/></svg><svg class="abs" style="left:2350px;top:1453px" width="42" height="42" viewBox="-21 -21 42 42"><circle r="17.4" fill="#050505" stroke="#c2c2c6" stroke-width="2"/><rect x="-8" y="-8" width="16" height="16" fill="#d0d0d0"/></svg>
</div></body></html>
